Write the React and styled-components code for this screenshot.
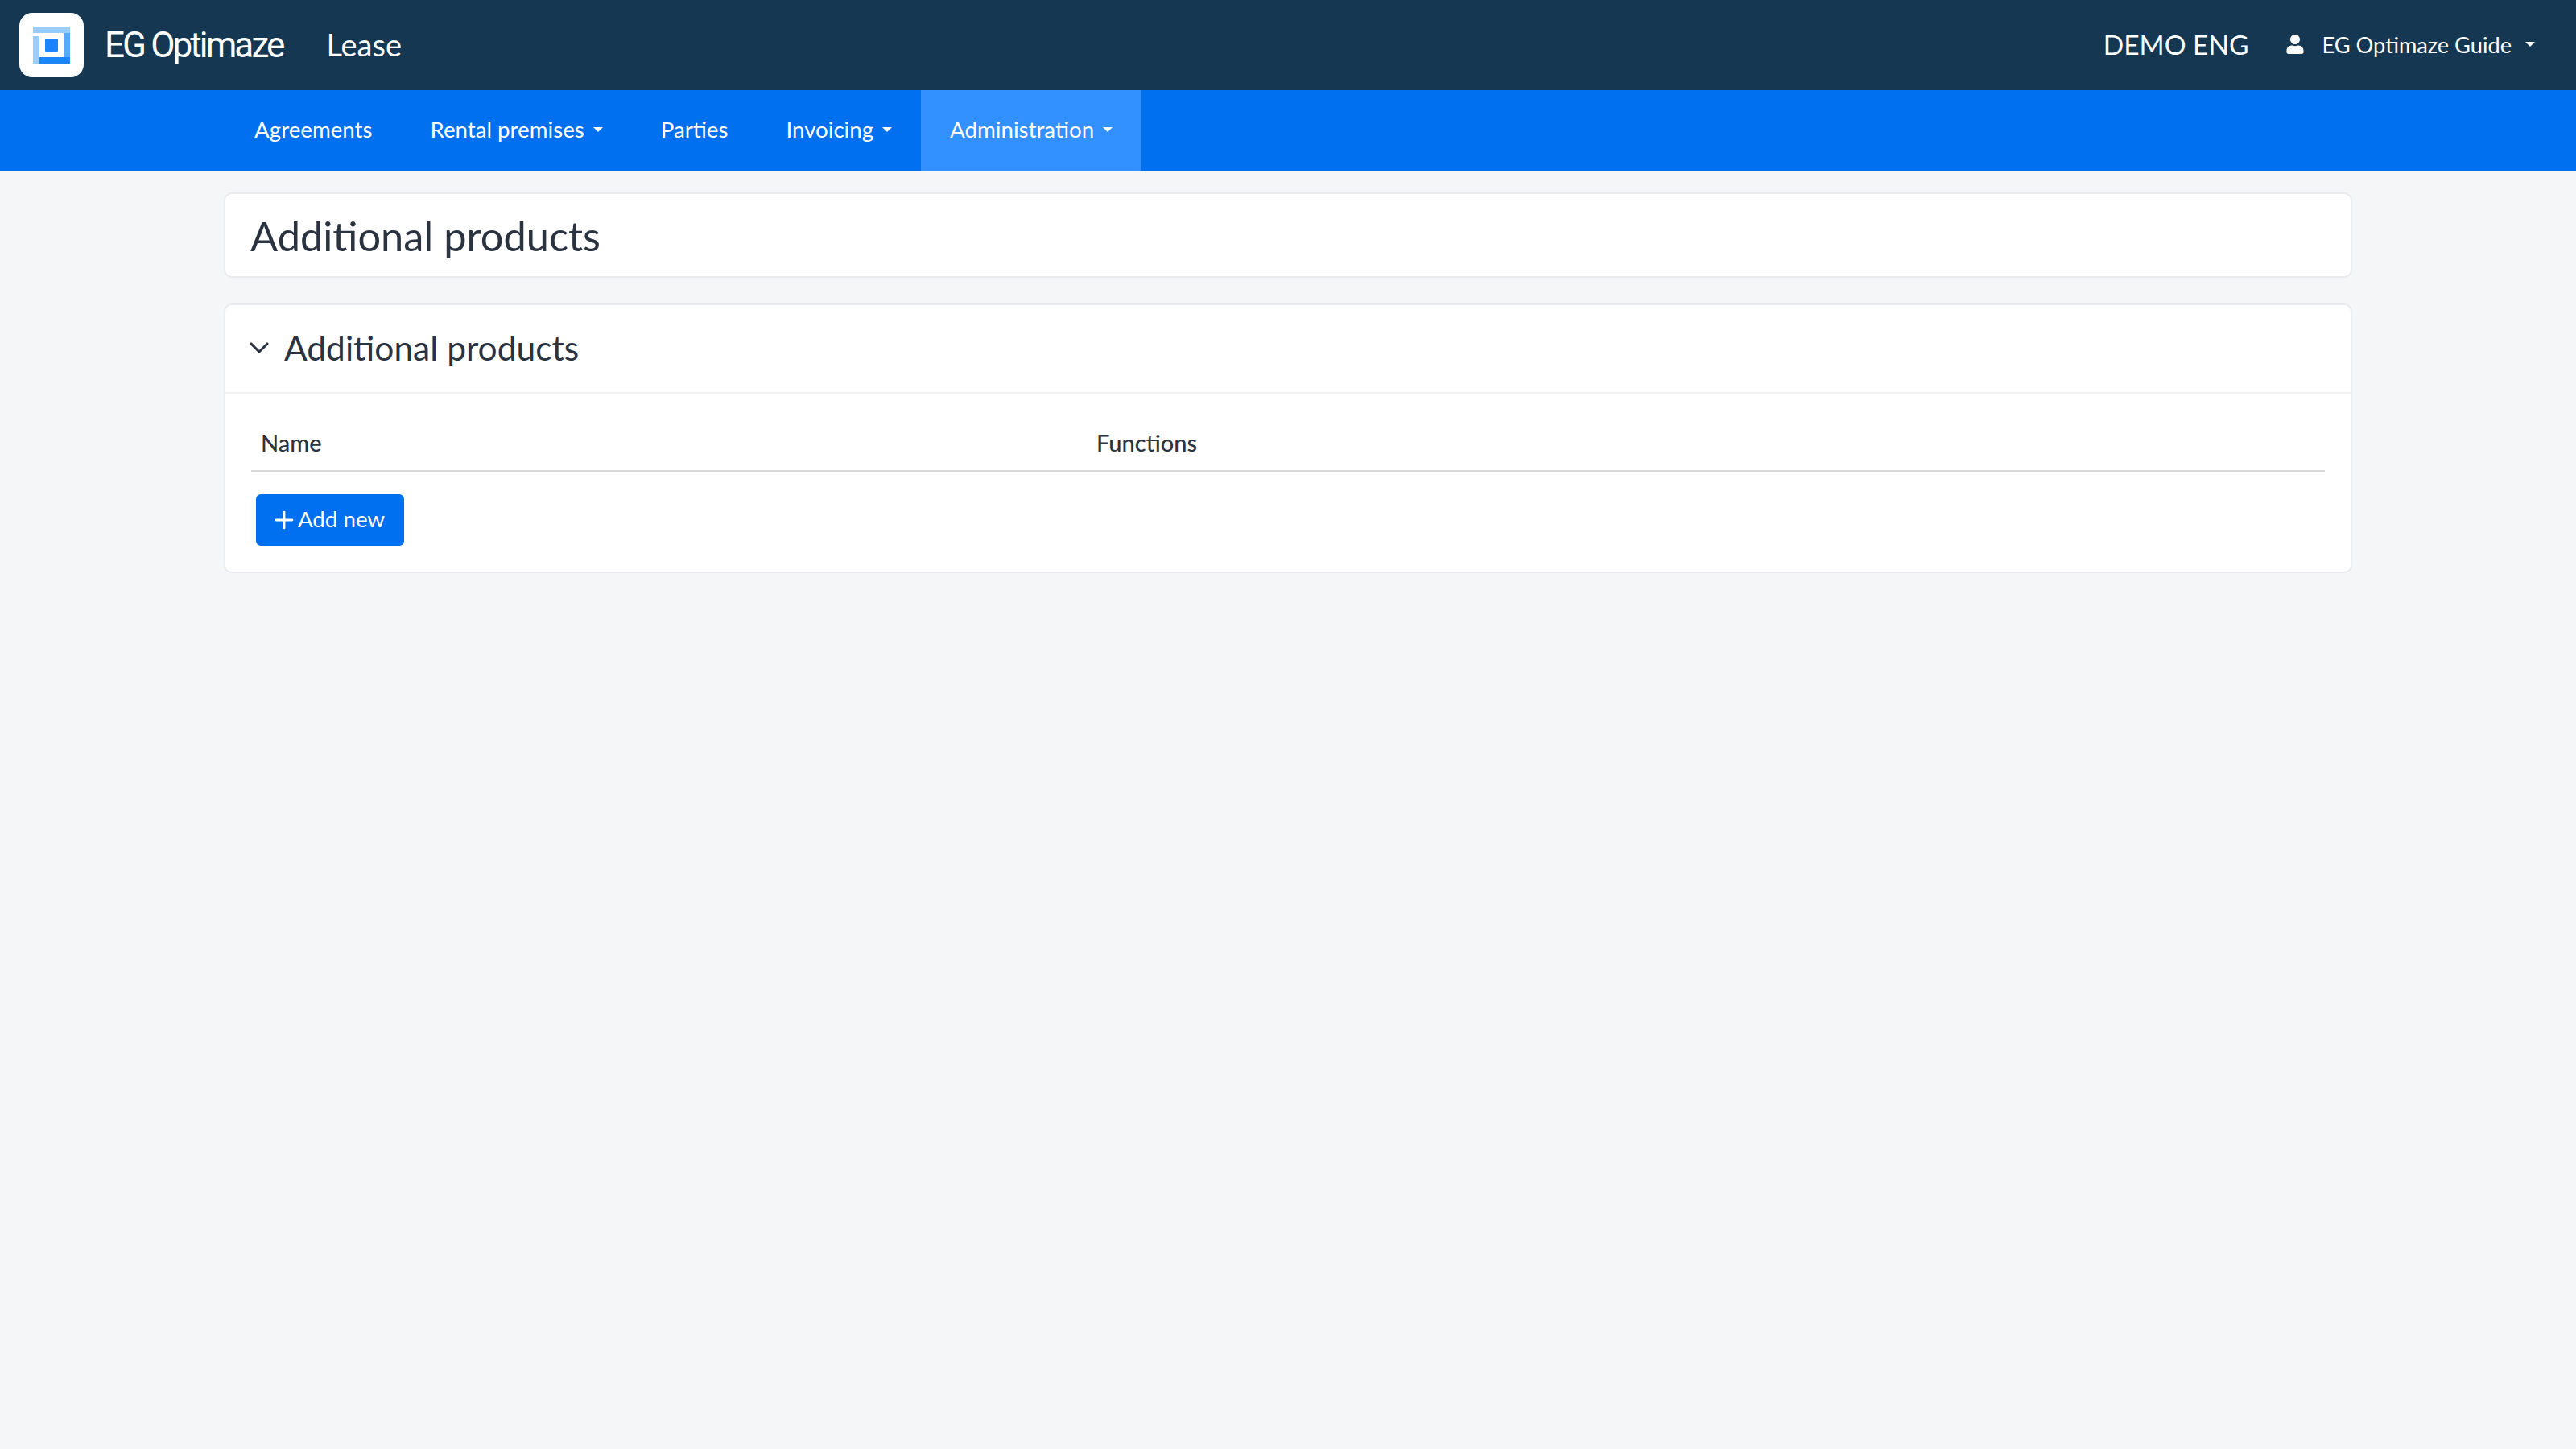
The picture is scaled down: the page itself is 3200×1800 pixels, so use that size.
import React from 'react';
import styled, { createGlobalStyle } from 'styled-components';
import { ChevronDown, Plus } from 'lucide-react';
import { FaUser } from 'react-icons/fa';

const Global = createGlobalStyle`
  html, body { margin: 0; padding: 0; }
  body {
    background: #f5f6f8;
    font-family: Lato, "Noto Sans", sans-serif;
    color: #2b3340;
  }
`;

const Page = styled.div`
  min-height: 1800px;
`;

const TopBar = styled.header`
  height: 112px;
  background: #163752;
  color: #fff;
  display: flex;
  align-items: center;
  padding: 0 51px 0 24px;
`;

const LogoBox = styled.div`
  width: 80px;
  height: 80px;
  background: #fff;
  border-radius: 16px;
  display: flex;
  align-items: center;
  justify-content: center;
`;

const Brand = styled.span`
  margin-left: 26px;
  font-family: Roboto, sans-serif;
  font-size: 44px;
  letter-spacing: -2.9px;
`;

const AppName = styled.span`
  margin: 0 0 2px 54px;
  font-size: 38px;
`;

const TopRight = styled.div`
  margin-left: auto;
  padding-bottom: 2px;
  display: flex;
  align-items: center;
`;

const Tenant = styled.span`
  font-size: 33.5px;
`;

const UserMenu = styled.div`
  margin-left: 46px;
  display: flex;
  align-items: center;
  font-size: 27.2px;
`;

const UserName = styled.span`
  margin-left: 21px;
`;

const Caret = styled.i`
  display: inline-block;
  margin-left: ${(p) => p.$gap || 11}px;
  border-top: 6px solid #fff;
  border-left: 6px solid transparent;
  border-right: 6px solid transparent;
`;

const NavBar = styled.nav`
  height: 100px;
  background: #0070f0;
  padding-left: 280px;
  display: flex;
`;

const NavItem = styled.a`
  display: flex;
  align-items: center;
  padding: 0 36px 3px;
  color: #fff;
  font-size: 27.7px;
  background: ${(p) => (p.$active ? '#3390ff' : 'transparent')};
`;

const Main = styled.main`
  width: 2644px;
  margin: 27px auto 0;
  display: flex;
  flex-direction: column;
  gap: 32px;
`;

const Card = styled.section`
  box-sizing: border-box;
  background: #fff;
  border: 2px solid #e9eaed;
  border-radius: 10px;
`;

const PageTitle = styled.h1`
  margin: 0;
  height: 102px;
  padding-left: 31px;
  display: flex;
  align-items: center;
  font-size: 50.5px;
  font-weight: 400;
`;

const CardHead = styled.div`
  height: 108px;
  padding-left: 22px;
  display: flex;
  align-items: center;
  border-bottom: 2px solid #eeeff1;
`;

const HeadChevron = styled(ChevronDown)`
  margin-top: -2px;
`;

const SectionTitle = styled.h2`
  margin: -4px 0 0 11px;
  font-size: 42.5px;
  font-weight: 400;
`;

const CardBody = styled.div`
  padding: 0 32px 32px;
`;

const TableHead = styled.div`
  display: grid;
  grid-template-columns: 1038px 1fr;
  height: 97px;
  box-sizing: border-box;
  align-items: center;
  padding: 25px 0 0 12px;
  border-bottom: 2px solid #d9d9d9;
  font-size: 29px;
  font-weight: 500;
`;

const AddButton = styled.button`
  margin: 28px 0 0 6px;
  width: 184px;
  height: 64px;
  padding: 0 0 3px;
  border: 0;
  border-radius: 6px;
  background: #0070f0;
  color: #fff;
  font: inherit;
  font-size: 27.7px;
  display: flex;
  align-items: center;
  justify-content: center;
`;

const AddIcon = styled(Plus)`
  margin: 3px 0 0 -6px;
`;

function Logo() {
  return (
    <svg width="46" height="46" viewBox="0 0 46 46">
      <rect x="0" y="0" width="46" height="8" fill="#99ccff" />
      <rect x="0" y="12" width="8" height="34" fill="#99ccff" />
      <rect x="38" y="8" width="8" height="30" fill="#55aaff" />
      <rect x="8" y="38" width="38" height="8" fill="#1a85ff" />
      <rect x="15" y="15" width="16" height="16" rx="1" fill="#1a85ff" />
    </svg>
  );
}

export default function App() {
  return (
    <Page>
      <Global />
      <TopBar>
        <LogoBox>
          <Logo />
        </LogoBox>
        <Brand>EG Optimaze</Brand>
        <AppName>Lease</AppName>
        <TopRight>
          <Tenant>DEMO ENG</Tenant>
          <UserMenu>
            <FaUser size={24} />
            <UserName>EG Optimaze Guide</UserName>
            <Caret $gap={17} />
          </UserMenu>
        </TopRight>
      </TopBar>
      <NavBar>
        <NavItem>Agreements</NavItem>
        <NavItem>
          Rental premises
          <Caret />
        </NavItem>
        <NavItem>Parties</NavItem>
        <NavItem>
          Invoicing
          <Caret />
        </NavItem>
        <NavItem $active>
          Administration
          <Caret />
        </NavItem>
      </NavBar>
      <Main>
        <Card>
          <PageTitle>Additional products</PageTitle>
        </Card>
        <Card>
          <CardHead>
            <HeadChevron size={40} strokeWidth={1.9} />
            <SectionTitle>Additional products</SectionTitle>
          </CardHead>
          <CardBody>
            <TableHead>
              <span>Name</span>
              <span>Functions</span>
            </TableHead>
            <AddButton>
              <AddIcon size={34} strokeWidth={2} />
              Add new
            </AddButton>
          </CardBody>
        </Card>
      </Main>
    </Page>
  );
}
